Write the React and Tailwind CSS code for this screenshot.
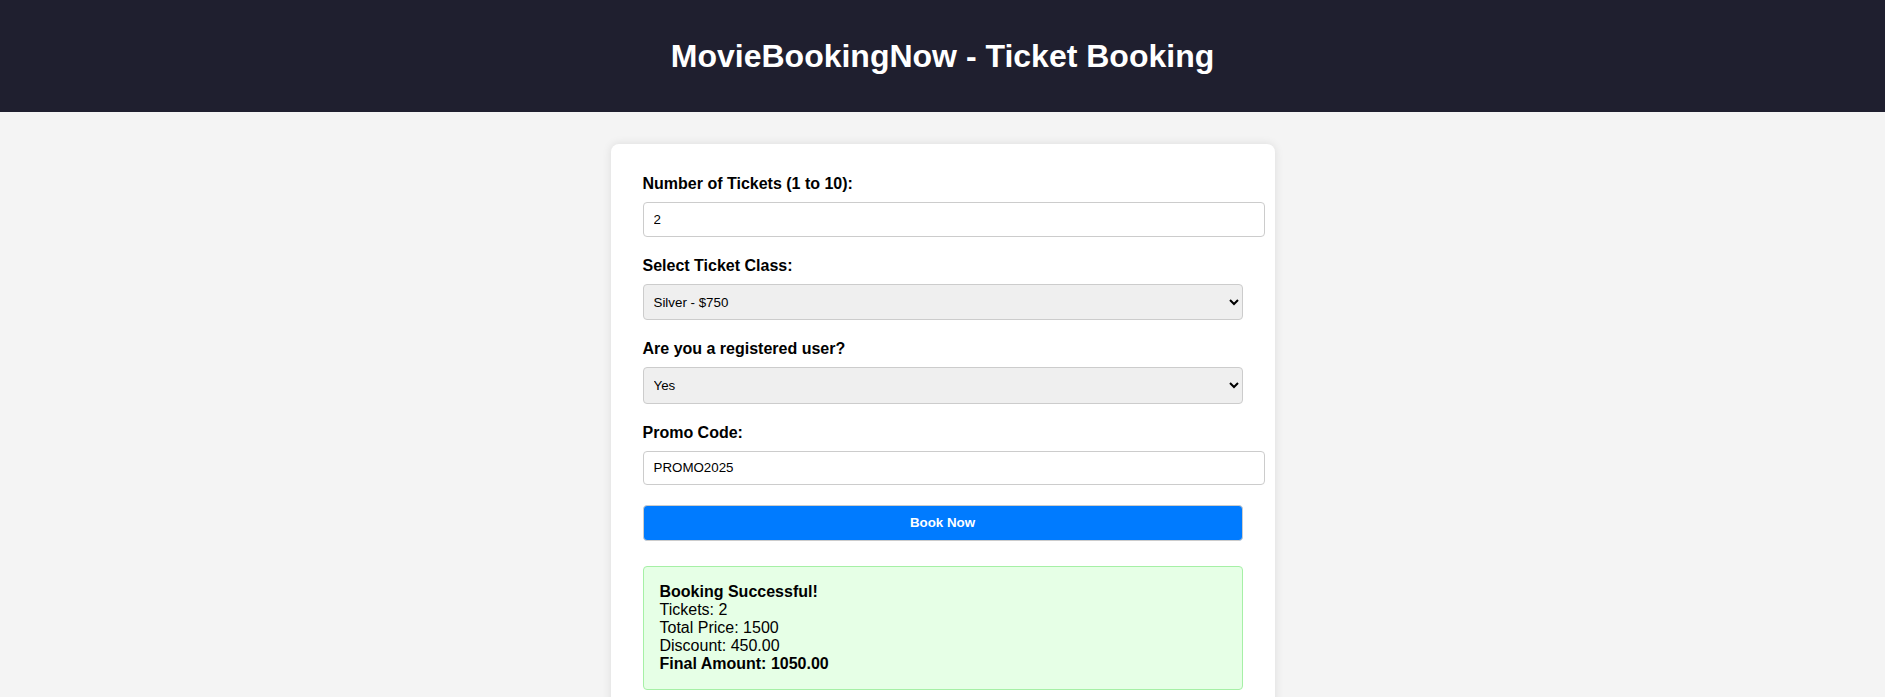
import React from 'react'

const Field = ({ label, children }) => (
  <div className="mb-5">
    <label className="mb-[9px] block text-base font-bold leading-[18px] text-black">{label}</label>
    {children}
  </div>
)

const App = () => {
  return (
    <div className="min-h-screen bg-[#f4f4f4] font-['Liberation_Sans',Arial,sans-serif] text-black">
      <header className="flex h-[112px] items-center justify-center bg-[#1f1f2f]">
        <h1 className="text-[32px] font-bold text-white">MovieBookingNow - Ticket Booking</h1>
      </header>

      <main className="mx-auto mt-8 w-[664px] rounded-lg bg-white px-8 pb-8 pt-[31px] shadow-[0_0_10px_rgba(0,0,0,0.1)]">
        <Field label="Number of Tickets (1 to 10):">
          <input
            type="number"
            defaultValue="2"
            className="box-content block h-[17px] w-[600px] rounded border border-[#ccc] bg-white px-2.5 py-2 text-[13.33px] text-black"
          />
        </Field>

        <Field label="Select Ticket Class:">
          <select
            defaultValue="silver"
            className="block h-9 w-[600px] rounded border border-[#ccc] bg-[#efefef] px-1.5 text-[13.33px] text-black"
          >
            <option value="silver">Silver - $750</option>
            <option value="gold">Gold - $1000</option>
            <option value="platinum">Platinum - $1500</option>
          </select>
        </Field>

        <Field label="Are you a registered user?">
          <select
            defaultValue="yes"
            className="block h-[37px] w-[600px] rounded border border-[#ccc] bg-[#efefef] px-1.5 text-[13.33px] text-black"
          >
            <option value="yes">Yes</option>
            <option value="no">No</option>
          </select>
        </Field>

        <Field label="Promo Code:">
          <input
            type="text"
            defaultValue="PROMO2025"
            className="box-content block h-[16px] w-[600px] rounded border border-[#ccc] bg-white px-2.5 py-2 text-[13.33px] text-black"
          />
        </Field>

        <button className="block h-9 w-[600px] rounded border border-[#ccc] bg-[#007bff] text-[13.33px] font-bold text-white">
          Book Now
        </button>

        <div className="mt-[25px] w-[600px] rounded border border-[#a6f0a6] bg-[#e6ffe6] p-4 text-base leading-[18px]">
          <p className="font-bold">Booking Successful!</p>
          <p>Tickets: 2</p>
          <p>Total Price: 1500</p>
          <p>Discount: 450.00</p>
          <p className="font-bold">Final Amount: 1050.00</p>
        </div>
      </main>
    </div>
  )
}

export default App
